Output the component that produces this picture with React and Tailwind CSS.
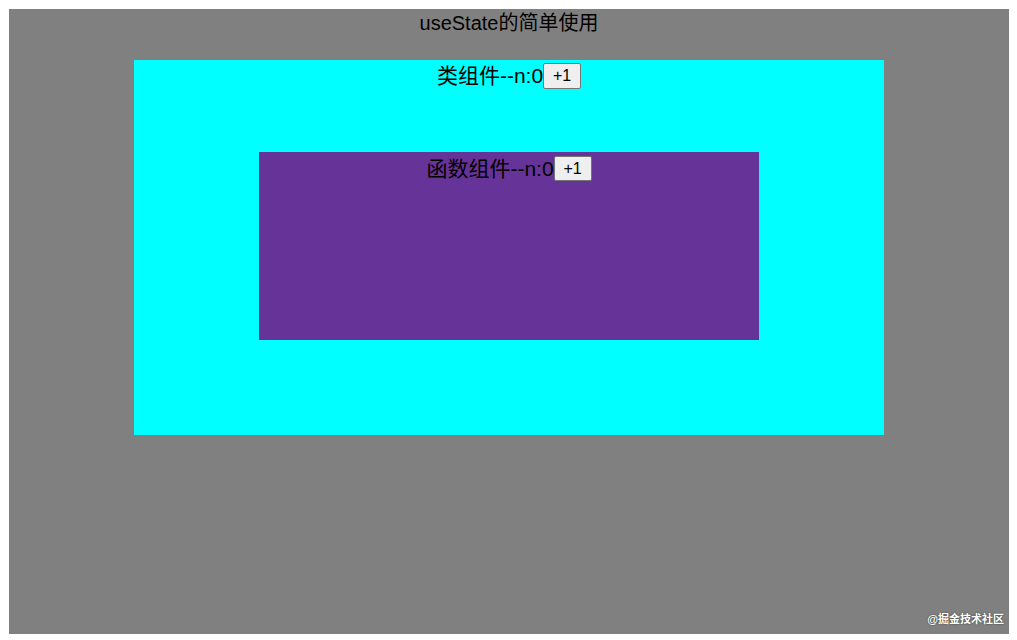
export default function App() {
  return (
    <div className="relative w-[1017px] h-[640px] bg-white pt-[9px] pl-[9px] font-['Liberation_Sans','Noto_Sans_CJK_SC',sans-serif] text-black">
      <div className="w-[1000px] h-[625px] bg-[#808080] flex flex-col items-center">
        <div className="h-[27px] flex items-center text-[20px]">useState的简单使用</div>
        <div className="mt-[24px] w-[750px] h-[375px] bg-[#00ffff] flex flex-col items-center">
          <div className="h-[32px] flex items-center text-[21px]">
            <span>类组件--n:0</span>
            <button className="w-[38px] h-[26px] bg-[#efefef] border border-[#767676] rounded-[2px] text-[16px] leading-none">+1</button>
          </div>
          <div className="mt-[60px] w-[500px] h-[188px] bg-[#663399] flex flex-col items-center">
            <div className="h-[33px] flex items-center text-[21px]">
              <span>函数组件--n:0</span>
              <button className="w-[38px] h-[25px] bg-[#efefef] border border-[#767676] rounded-[2px] text-[16px] leading-none">+1</button>
            </div>
          </div>
        </div>
      </div>
      <div className="absolute right-[13px] bottom-[13px] text-[11px] font-bold text-white [text-shadow:0_0_2px_rgba(0,0,0,0.6)]">@掘金技术社区</div>
    </div>
  );
}
